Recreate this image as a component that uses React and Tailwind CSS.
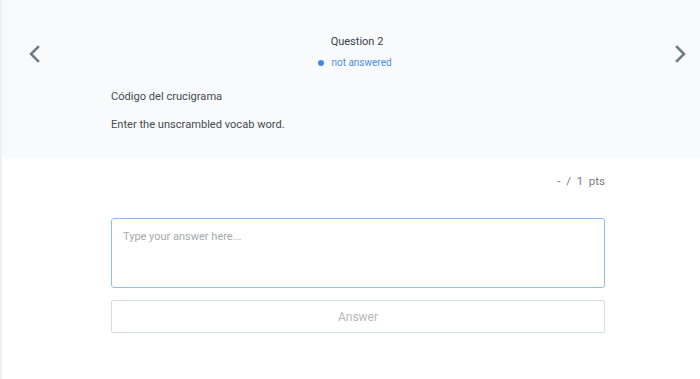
import React from "react";

function Chevron({ dir }) {
  return (
    <svg width="14" height="18" viewBox="0 0 14 18" fill="none">
      {dir === "left" ? (
        <path d="M10 2 L3 9 L10 16" stroke="#6b7b88" strokeWidth="2.6" strokeLinecap="square" />
      ) : (
        <path d="M4 2 L11 9 L4 16" stroke="#6b7b88" strokeWidth="2.6" strokeLinecap="square" />
      )}
    </svg>
  );
}

export default function App() {
  return (
    <div className="w-[700px] h-[379px] bg-white flex overflow-hidden" style={{ fontFamily: "Roboto, 'Liberation Sans', sans-serif" }}>
      <div className="w-[2px] bg-[#eef0f2] shrink-0" />
      <div className="flex-1 flex flex-col">
        <div className="h-[158px] bg-[#f8fafc] flex items-start">
          <div className="w-[66px] shrink-0 flex justify-center pt-[45px]">
            <Chevron dir="left" />
          </div>
          <div className="flex-1 flex flex-col">
            <div className="flex flex-col items-center pt-[34px] pr-[14px]">
              <div className="text-[11px] leading-[16px] text-[#3a4046]">Question 2</div>
              <div className="flex items-center gap-[7px] mt-[6px] -ml-[4px]">
                <span className="w-[6px] h-[6px] rounded-full bg-[#3d8ae6]" />
                <span className="text-[10px] leading-[14px] text-[#4a90e2]">not answered</span>
              </div>
            </div>
            <div className="pl-[43px] mt-[20px] text-[11.1px] text-[#454b51]">
              <div className="leading-[14px]">Código del crucigrama</div>
              <div className="leading-[14px] mt-[14px]">Enter the unscrambled vocab word.</div>
            </div>
          </div>
          <div className="w-[40px] shrink-0 flex justify-center pt-[45px]">
            <Chevron dir="right" />
          </div>
        </div>
        <div className="pl-[109px] w-[603px]">
          <div className="flex justify-end pt-[16px] text-[11.5px] leading-[14px] text-[#777c80] whitespace-pre">
            {"-  /  1  pts"}
          </div>
          <div className="mt-[30px] h-[70px] border border-[#8fbdf2] rounded-[3px] px-[11px] pt-[11px] text-[11px] text-[#a4a9ad] leading-[14px]">
            Type your answer here...
          </div>
          <div className="mt-[12px] h-[33px] border border-[#d7dcdf] rounded-[2px] flex items-center justify-center text-[12px] text-[#b3b8bc]">
            Answer
          </div>
        </div>
      </div>
    </div>
  );
}
